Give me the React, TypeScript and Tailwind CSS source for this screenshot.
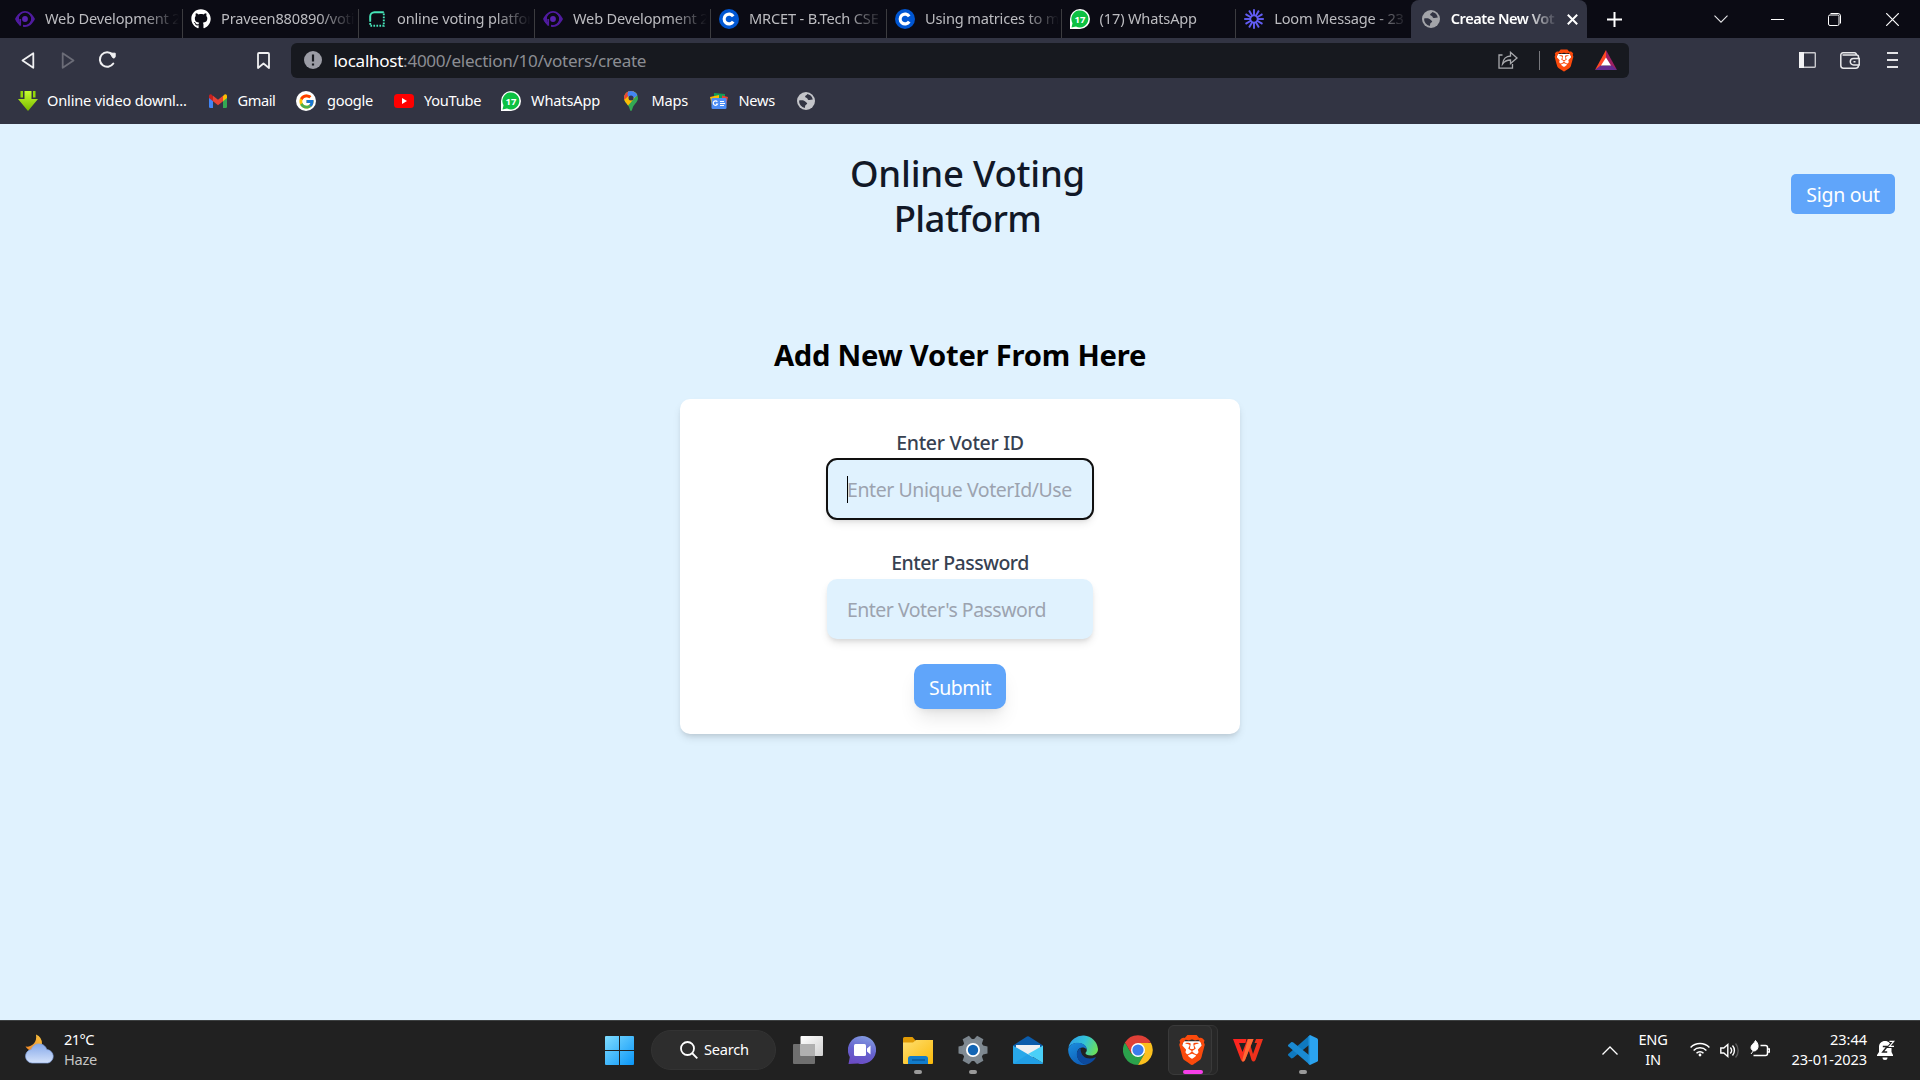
import React from "react";
import { FaGithub } from "react-icons/fa";
import { FcGoogle } from "react-icons/fc";
import { SiBrave } from "react-icons/si";

type IconProps = { className?: string };

const EyeIcon = () => (
  <svg className="h-5 w-5" viewBox="0 0 20 20" fill="none">
    <path d="M0 10C2.500 5 6 2 10 2s7.500 3 10 8c-2.500 5-6 8-10 8-.7 0-1.300-.1-2-.2V15.500A6 6 0 1 0 4 10.200c0 1.500.6 3 1.700 4.100V17C3.300 15.500 1.500 13 0 10Z" fill="#4f1b9e" />
    <circle cx="10" cy="10" r="5.800" fill="#0b0b14" />
    <circle cx="10" cy="10" r="4.600" stroke="#0b0b14" strokeWidth="2" />
    <circle cx="10" cy="10" r="2.900" fill="#5a23b0" />
    <path d="M5.200 10v6.500M1.500 10.500c1 2 2 3.500 4 5" stroke="#4f1b9e" strokeWidth="1.800" />
  </svg>
);

const RenderIcon = () => (
  <svg className="h-4 w-4" viewBox="0 0 16 16" fill="none">
    <path d="M1.200 9V5.500A4.300 4.300 0 0 1 5.500 1.200H14.800" stroke="#46e3b7" strokeWidth="2" />
    <path d="M1.200 9V14.800H14.800V1" stroke="#46e3b7" strokeWidth="1.900" strokeDasharray="1.700 1.300" />
  </svg>
);

const CourseraIcon = () => (
  <svg className="h-5 w-5" viewBox="0 0 20 20" fill="none">
    <circle cx="10" cy="10" r="10" fill="#0056d2" />
    <path d="M14.200 7.400A4.900 4.900 0 1 0 14.200 12.600" stroke="#fff" strokeWidth="3.100" />
  </svg>
);

const WhatsAppBadge = () => (
  <svg className="h-5 w-5" viewBox="0 0 20 20">
    <path d="M0 20V10A10 10 0 1 1 10 20Z" fill="#fff" />
    <path d="M1.500 18.500l1-4.300A8.500 8.500 0 1 1 6 17.500Z" fill="#0dc143" />
    <text x="10" y="13.600" textAnchor="middle" fontSize="9.500" fontWeight="700" fill="#fff" fontFamily="Noto Sans, sans-serif">17</text>
  </svg>
);

const LoomIcon = () => (
  <svg className="h-5 w-5" viewBox="-10 -10 20 20" fill="none" stroke="#625df5" strokeWidth="1.900">
    {[0, 30, 60, 90, 120, 150, 180, 210, 240, 270, 300, 330].map((a) => (
      <path key={a} d="M0 -3.600V-9.800" transform={`rotate(${a})`} />
    ))}
    <circle r="3.700" strokeWidth="1.800" />
  </svg>
);

const GlobeIcon = ({ className }: IconProps) => (
  <svg className={className} viewBox="0 0 18 18">
    <circle cx="9" cy="9" r="9" fill="currentColor" />
    <path d="M2.100 8.500C4.500 8 7 8.200 8.200 9.400 9 10.400 10 10.500 10.200 11.400c.1 1-1.700 1.200-1.900 2.200-.2.900-.3 1.800-.5 2.400A7 7 0 0 1 2.100 8.500Z" fill="#323443" />
    <path d="M10.300 2.100c-.2 1.200-2 1.300-2.200 2.300-.1 1.300 1.700 1 2.300 2 .5 1 .6 1.600 2 1.600 1.300 0 2-.500 3.400-.400A7 7 0 0 0 10.300 2.100Z" fill="#323443" />
  </svg>
);

const tabs = [
  { icon: <EyeIcon />, text: "Web Development 2" },
  { icon: <FaGithub className="h-5 w-5 text-white" />, text: "Praveen880890/voti" },
  { icon: <RenderIcon />, text: "online voting platfor" },
  { icon: <EyeIcon />, text: "Web Development 2" },
  { icon: <CourseraIcon />, text: "MRCET - B.Tech CSE" },
  { icon: <CourseraIcon />, text: "Using matrices to m" },
  { icon: <WhatsAppBadge />, text: "(17) WhatsApp" },
  { icon: <LoomIcon />, text: "Loom Message - 23" },
];

function TabStrip() {
  return (
    <div className="flex h-[38px] bg-[#0b0b14] pl-[7px]">
      {tabs.map((t, i) => (
        <div
          key={i}
          className={`relative flex h-[38px] shrink-0 items-center pl-2 ${i < 5 ? "w-[176px]" : "w-[174.600px]"} ${i < 7 ? "after:absolute after:right-0 after:bottom-0 after:h-[29px] after:w-px after:bg-[#3c3c40]" : ""}`}
        >
          <div className="flex w-5 justify-center">{t.icon}</div>
          <div className="ml-2.5 w-[135px] overflow-hidden whitespace-nowrap text-[14.600px] tracking-[-0.012em] text-[#bcbcc0] [mask-image:linear-gradient(to_right,#000_98px,transparent_134px)]">
            {t.text}
          </div>
        </div>
      ))}
      <div className="flex h-[38px] w-[176px] shrink-0 items-center rounded-t-lg bg-[#323443] pl-[11px]">
        <GlobeIcon className="h-[18px] w-[18px] text-[#a3a4a9]" />
        <div className="ml-[11px] w-[105px] overflow-hidden whitespace-nowrap text-[14.600px] font-semibold tracking-[-0.034em] text-white [mask-image:linear-gradient(to_right,#000_75px,transparent_107px)]">
          Create New Vot
        </div>
        <svg className="ml-[11px] h-[11px] w-[11px]" viewBox="0 0 11 11" stroke="#fff" strokeWidth="2">
          <path d="M.8.8l9.400 9.400M10.200.8L.8 10.200" />
        </svg>
      </div>
      <div className="flex h-[38px] items-center">
        <svg className="ml-[20px] h-[15px] w-[15px]" viewBox="0 0 15 15" stroke="#fff" strokeWidth="2">
          <path d="M7.500 0v15M0 7.500h15" />
        </svg>
        <svg className="ml-[92px] h-2 w-[14px]" viewBox="0 0 14 8" fill="none" stroke="#e6e6e8" strokeWidth="1.100">
          <path d="M.5.7L7 7.200 13.500.7" />
        </svg>
        <div className="ml-[43px] h-px w-[13px] bg-white" />
        <svg className="ml-[44px] h-[13px] w-[13px]" viewBox="0 0 13 13" fill="none" stroke="#fff" strokeWidth="1">
          <rect x=".5" y="2" width="10.500" height="10.500" rx="1.500" />
          <path d="M2.500.5h7.500a2.500 2.500 0 0 1 2.500 2.500v7.500" />
        </svg>
        <svg className="ml-[45px] h-[13px] w-[13px]" viewBox="0 0 13 13" stroke="#fff" strokeWidth="1.200">
          <path d="M.2.2l12.600 12.600M12.800.2L.2 12.800" />
        </svg>
      </div>
    </div>
  );
}

const BraveLion = ({ className }: IconProps) => (
  <div className={`relative ${className}`}>
    <svg className="absolute inset-0 h-full w-full" viewBox="0 0 24 24">
      <path d="M5 5h14l1 4-3 10-5 4-5-4L4 9Z" fill="#fff" />
    </svg>
    <SiBrave className="absolute inset-0 h-full w-full text-[#fb4a0c]" />
  </div>
);

function Toolbar() {
  return (
    <div className="flex h-[44px] items-center bg-[#323443]">
      <svg className="ml-[21px] h-[17px] w-[14px]" viewBox="0 0 14 17" fill="none" stroke="#f0f0f2" strokeWidth="1.800" strokeLinejoin="round">
        <path d="M12.300 1.200v14.600L1.500 8.500Z" />
      </svg>
      <svg className="ml-[26px] h-[17px] w-[14px]" viewBox="0 0 14 17" fill="none" stroke="#6b6c77" strokeWidth="1.800" strokeLinejoin="round">
        <path d="M1.700 1.200v14.600L12.500 8.500Z" />
      </svg>
      <svg className="ml-[23px] h-[18px] w-[19px]" viewBox="0 0 19 18" fill="none" stroke="#f0f0f2" strokeWidth="2">
        <path d="M14.500 3.500A7.300 7.300 0 1 0 15.300 12.500" strokeLinecap="round" />
        <path d="M12 2.200h5.200v3.500a1.500 1.500 0 0 1-2.600.8Z" fill="#f0f0f2" strokeWidth="1" />
      </svg>
      <svg className="ml-[140px] h-[17px] w-[13px]" viewBox="0 0 13 17" fill="none" stroke="#f0f0f2" strokeWidth="1.800" strokeLinejoin="round">
        <path d="M1 2a1 1 0 0 1 1-1h9a1 1 0 0 1 1 1v14l-5.500-4.500L1 16Z" />
      </svg>
      <div className="ml-[21px] flex h-[35px] w-[1338px] items-center rounded-md bg-[#17191f]">
        <svg className="ml-[13px] h-[18px] w-[18px]" viewBox="0 0 18 18">
          <circle cx="9" cy="9" r="9" fill="#9b9ca5" />
          <path d="M9 3.500v7M9 12.500v2" stroke="#17191f" strokeWidth="2.200" />
        </svg>
        <div className="ml-[11.500px] pt-[2px] whitespace-nowrap text-[17.100px] tracking-[-0.017em] text-[#8b8d93]">
          <span className="text-white">localhost</span>:4000/election/10/voters/create
        </div>
        <svg className="ml-auto h-[18px] w-[20px]" viewBox="0 0 20 18" fill="none" stroke="#a8a9ad" strokeWidth="1.300">
          <path d="M4.500 4H1v13.200h13.500V13" />
          <path d="M4.500 13C5 8.500 8 5 12.500 5V1.300L19 7l-6.500 5.500V9C9.500 9 6.500 10.200 4.500 13Z" />
        </svg>
        <div className="ml-[21px] h-[19px] w-px bg-[#77787d]" />
        <BraveLion className="ml-[13px] h-[23px] w-[22px]" />
        <svg className="mr-[12px] ml-[20px] h-[20px] w-[22px]" viewBox="0 0 22 20">
          <path d="M11 0L0 20l11-7Z" fill="#ff4724" />
          <path d="M11 0l11 20-11-7Z" fill="#9e1f63" />
          <path d="M0 20h22l-5-4.500H5.500Z" fill="#662d91" />
          <path d="M11 7.500l-5 8h10Z" fill="#fff" />
        </svg>
      </div>
      <svg className="ml-[170px] h-4 w-[17px]" viewBox="0 0 17 16" fill="none">
        <rect x=".7" y=".7" width="15.600" height="14.600" rx=".7" stroke="#c9c9ce" strokeWidth="1.400" />
        <path d="M0 0h5v16H0Z" fill="#f2f2f4" />
      </svg>
      <svg className="ml-[24px] h-[17px] w-[20px]" viewBox="0 0 20 17" fill="none" stroke="#e9e9ec" strokeWidth="1.500">
        <path d="M18.500 6.500V5a2 2 0 0 0-2-2H2.500M16.500 3a2 2 0 0 0-2-2.200H3A2.200 2.200 0 0 0 .8 3v10.500a2.700 2.700 0 0 0 2.700 2.700h12a3 3 0 0 0 3-3" />
        <path d="M19.200 6.500h-5.700a3.200 3.200 0 0 0 0 6.400h5.700ZM13.500 9.700h2" />
      </svg>
      <div className="ml-[27px] flex w-[11px] flex-col items-center gap-[5px]">
        <div className="h-[2px] w-[11px] bg-[#e3e3e6]" />
        <div className="h-[2px] w-[11px] bg-[#e3e3e6]" />
        <div className="h-[2px] w-[11px] bg-[#e3e3e6]" />
      </div>
    </div>
  );
}

function Bookmarks() {
  const label = "whitespace-nowrap text-[14.600px] text-white";
  return (
    <div className="flex h-[42px] items-center bg-[#323443] pb-[4px]">
      <svg className="ml-[18px] h-5 w-5" viewBox="0 0 20 20">
        <defs>
          <linearGradient id="dl" x1="0" y1="0" x2="0" y2="1">
            <stop offset="0" stopColor="#c6ff2e" />
            <stop offset="1" stopColor="#79b800" />
          </linearGradient>
        </defs>
        <path d="M6.500 0h7v8h6.500L10 20 0 8h6.500Z" fill="url(#dl)" />
        <path d="M2.500 0h2.500v6.500H2.500ZM15 0h2.500v6.500H15Z" fill="#93d60a" />
      </svg>
      <span className={`${label} ml-[9px] w-[140px] tracking-[-0.012em]`}>Online video downl...</span>
      <svg className="ml-[22px] h-[14px] w-[18px]" viewBox="0 0 18 14">
        <path d="M0 2.500V12.700A1.300 1.300 0 0 0 1.300 14H4V5Z" fill="#4285f4" />
        <path d="M18 2.500V12.700a1.300 1.300 0 0 1-1.300 1.300H14V5Z" fill="#34a853" />
        <path d="M14 2l1.300-1.200C16.500-.2 18 .5 18 2.200V4l-4 3.300Z" fill="#fbbc04" />
        <path d="M4 2L2.700.8C1.500-.2 0 .5 0 2.200V4l4 3.300Z" fill="#c5221f" />
        <path d="M4 1.800l5 3.900 5-3.900v5.500l-5 3.900-5-3.900Z" fill="#ea4335" />
      </svg>
      <span className={`${label} ml-[10.500px] w-[38.500px] tracking-[-0.030em]`}>Gmail</span>
      <div className="ml-[20px] flex h-5 w-5 items-center justify-center rounded-full bg-white">
        <FcGoogle className="h-[17px] w-[17px]" />
      </div>
      <span className={`${label} ml-[11px] w-[47px] tracking-[-0.018em]`}>google</span>
      <svg className="ml-[20px] h-[14px] w-5" viewBox="0 0 20 14">
        <rect width="20" height="14" rx="3.500" fill="#f00" />
        <path d="M8 4l5 3-5 3Z" fill="#fff" />
      </svg>
      <span className={`${label} ml-[10px] w-[58px] tracking-[-0.018em]`}>YouTube</span>
      <div className="ml-[19px]"><WhatsAppBadge /></div>
      <span className={`${label} ml-[10px] w-[70px] tracking-[-0.010em]`}>WhatsApp</span>
      <svg className="ml-[23px] h-5 w-[14px]" viewBox="0 0 14 20">
        <defs><clipPath id="pin"><path d="M7 0a7 7 0 0 1 7 7c0 4-3.500 5.500-5.200 9.500C8 18.500 7.900 20 7 20s-1-1.500-1.800-3.500C3.500 12.500 0 11 0 7a7 7 0 0 1 7-7Z" /></clipPath></defs>
        <g clipPath="url(#pin)">
          <path d="M0 0h14v20H0Z" fill="#34a853" />
          <path d="M0 0h14v3L2 17 0 12Z" fill="#fbbc04" />
          <path d="M0 0h10L0 9Z" fill="#ea4335" />
          <path d="M4 0h10v4L7 9 3.500 4Z" fill="#4285f4" />
        </g>
        <circle cx="7" cy="7" r="2.500" fill="#31344a" />
      </svg>
      <span className={`${label} ml-[13.500px] w-[37.500px] tracking-[-0.015em]`}>Maps</span>
      <svg className="ml-[21px] h-4 w-[18px]" viewBox="0 0 18 16">
        <path d="M4 0l11 1v5H4Z" fill="#0f9d58" />
        <path d="M0 4l9-2v9L2 12Z" fill="#fbbc04" />
        <path d="M18 4l-6-1.500v9l4 1Z" fill="#ea4335" />
        <rect x="1.500" y="5" width="15" height="11" rx="1.300" fill="#4d8df6" />
        <path d="M7.300 8.800A2.200 2.200 0 1 0 7.500 11H6M10 8.500h4M10 10.500h5M10 12.500h4" fill="none" stroke="#fff" strokeWidth="1.200" />
      </svg>
      <span className={`${label} ml-[10.500px] w-[37.500px] tracking-[-0.018em]`}>News</span>
      <GlobeIcon className="ml-[21px] h-[18px] w-[18px] text-[#c4c5ca]" />
    </div>
  );
}

function VotingPage() {
  return (
    <main className="flex h-[896px] flex-col items-center bg-[#e0f2fe]">
      <header className="flex w-full items-start pt-[27px]">
        <h1 className="ml-[848px] w-[239px] text-center text-[36.500px] leading-[45px] font-medium tracking-[-0.016em] text-[#111827]">
          <span className="block tracking-[-0.006em]">Online Voting</span>
          <span className="block">Platform</span>
        </h1>
        <button className="mt-[23px] mr-[25px] ml-auto h-10 w-[104px] rounded-[5px] bg-[#60a5fa] pt-0.5 text-[19.500px] tracking-[-0.015em] text-white">
          Sign out
        </button>
      </header>
      <h2 className="mt-[94px] text-[29.200px] leading-10 font-bold tracking-[-0.008em] whitespace-nowrap text-black">Add New Voter From Here</h2>
      <form className="mt-6 flex h-[335px] w-[560px] flex-col items-center rounded-[10px] bg-white pt-[29px] shadow-[0_5px_8px_-1px_rgba(0,0,0,0.100),0_3px_5px_-2px_rgba(0,0,0,0.100)]">
        <label className="text-[19.500px] leading-[30px] font-medium tracking-[-0.015em] text-[#374151]">Enter Voter ID</label>
        <div className="relative mt-px">
          <input
            className="block h-[60px] w-[266px] rounded-[10px] bg-[#e0f2fe] px-5 text-[19.500px] tracking-[-0.022em] shadow-[0_5px_8px_-1px_rgba(0,0,0,0.100),0_3px_5px_-2px_rgba(0,0,0,0.100)] outline-2 -outline-offset-1 outline-[#101010] placeholder:text-[#9ca3af]"
            placeholder="Enter Unique VoterId/Use"
          />
          <div className="absolute top-[17px] left-5 h-[27px] w-px bg-black" />
        </div>
        <label className="mt-[29px] text-[19.500px] leading-[30px] font-medium tracking-[-0.026em] text-[#374151]">Enter Password</label>
        <input
          className="mt-px block h-[60px] w-[266px] rounded-[10px] bg-[#e0f2fe] px-5 text-[19.500px] tracking-[-0.027em] shadow-[0_5px_8px_-1px_rgba(0,0,0,0.100),0_3px_5px_-2px_rgba(0,0,0,0.100)] placeholder:text-[#9ca3af]"
          placeholder="Enter Voter's Password"
        />
        <button className="mt-[25px] h-[45px] w-[92px] rounded-[10px] bg-[#60a5fa] pt-0.5 text-[19.500px] tracking-[-0.025em] text-white shadow-[0_12px_19px_-4px_rgba(0,0,0,0.100),0_5px_8px_-5px_rgba(0,0,0,0.100)]">
          Submit
        </button>
      </form>
    </main>
  );
}

function AppButton({ children, dot }: { children: React.ReactNode; dot?: boolean }) {
  return (
    <div className="relative flex h-full w-[55px] items-center justify-center pb-px">
      {children}
      {dot && <div className="absolute bottom-[6px] left-[23.500px] h-1 w-2 rounded-full bg-[#9a9a9a]" />}
    </div>
  );
}

function Taskbar() {
  return (
    <footer className="flex h-[60px] items-stretch border-t border-[#3d4041] bg-[#212121] text-white">
      <div className="flex w-[605px] items-center pb-[3px]">
        <svg className="ml-[25px] h-[30px] w-[30px]" viewBox="0 0 30 30">
          <defs>
            <linearGradient id="cl" x1="0" y1="0" x2="0" y2="1">
              <stop offset="0" stopColor="#86a9ea" />
              <stop offset="1" stopColor="#d3e1fa" />
            </linearGradient>
            <linearGradient id="mn" x1="1" y1="0" x2="0" y2="1">
              <stop offset="0" stopColor="#f9c440" />
              <stop offset="1" stopColor="#f08424" />
            </linearGradient>
          </defs>
          <path d="M11 .5A10 10 0 0 1 17 10L8 17A10 10 0 0 1 .5 12.500C6 13.500 12.500 9 11 .5Z" fill="url(#mn)" />
          <path d="M7 29a6.800 6.800 0 0 1-.8-13.500A8.200 8.200 0 0 1 21.800 15.600 6.800 6.800 0 0 1 23 29Z" fill="url(#cl)" stroke="#87a6e2" strokeWidth=".7" />
        </svg>
        <div className="ml-[9px] text-[14.600px] leading-5 tracking-[-0.018em]">
          <div className="tracking-[-0.040em]">21°C</div>
          <div className="text-[#c5c5c5]">Haze</div>
        </div>
      </div>
      <div className="flex items-center">
        <svg className="h-[29px] w-[29px]" viewBox="0 0 29 29">
          <defs>
            <linearGradient id="win" x1="0" y1="0" x2="1" y2="1">
              <stop offset="0" stopColor="#7fdcff" />
              <stop offset="1" stopColor="#0a96f8" />
            </linearGradient>
          </defs>
          <path d="M1 0h13v14H0V1a1 1 0 0 1 1-1ZM15 0h13a1 1 0 0 1 1 1v13H15ZM0 15h14v14H1a1 1 0 0 1-1-1ZM15 15h14v13a1 1 0 0 1-1 1H15Z" fill="url(#win)" />
        </svg>
        <div className="mb-px ml-[17px] flex h-10 w-[125px] items-center rounded-full border border-[#333333] bg-[#2d2d2d]">
          <svg className="ml-[28px] h-[18px] w-[18px]" viewBox="0 0 18 18" fill="none" stroke="#fff" strokeWidth="1.800">
            <circle cx="7.500" cy="7.500" r="6.500" />
            <path d="M12 12l5.300 5.300" />
          </svg>
          <span className="ml-[6px] text-[14.600px] tracking-[-0.015em]">Search</span>
        </div>
        <div className="ml-[4px] flex h-full">
          <AppButton>
            <svg className="h-7 w-[30px]" viewBox="0 0 30 28">
              <defs><linearGradient id="tv" x1="0" y1="0" x2="1" y2="1"><stop offset="0" stopColor="#fff" /><stop offset="1" stopColor="#d0d0d0" /></linearGradient></defs>
              <rect y="8" width="22" height="20" rx="1" fill="#6f6f6f" />
              <rect x="7.500" width="22.500" height="20" rx="1" fill="url(#tv)" />
              <rect x="7.500" y="8" width="14.500" height="12" fill="#b0b0b0" />
            </svg>
          </AppButton>
          <AppButton>
            <svg className="mr-px h-7 w-7" viewBox="0 0 28 28">
              <defs><linearGradient id="ch" x1=".6" y1="0" x2=".3" y2="1"><stop offset="0" stopColor="#829ae0" /><stop offset=".5" stopColor="#6664cf" /><stop offset="1" stopColor="#6b4bc4" /></linearGradient></defs>
              <path d="M14 0a14 14 0 1 1-4 27.400L.5 28l1.300-7A14 14 0 0 1 14 0Z" fill="url(#ch)" />
              <rect x="6" y="8" width="12" height="12" rx="1.500" fill="#fff" />
              <path d="M19 12.500l3.500-3v9l-3.500-3Z" fill="#fff" />
            </svg>
          </AppButton>
          <AppButton dot>
            <svg className="h-[27px] w-[30px]" viewBox="0 0 30 27">
              <defs><linearGradient id="fo" x1="0" y1="0" x2="1" y2="1"><stop offset="0" stopColor="#ffdf70" /><stop offset="1" stopColor="#fab909" /></linearGradient></defs>
              <path d="M0 1.500A1.500 1.500 0 0 1 1.500 0h8L13 4v4H0Z" fill="#e09a05" />
              <path d="M0 5.500h10L13 3h17v23a1 1 0 0 1-1 1H1a1 1 0 0 1-1-1Z" fill="url(#fo)" />
              <path d="M5 27v-5.500A2.500 2.500 0 0 1 7.500 19h15a2.500 2.500 0 0 1 2.500 2.500V27Z" fill="#127ccb" />
              <path d="M9 23h13" stroke="#07508f" strokeWidth="1.200" />
            </svg>
          </AppButton>
          <AppButton dot>
            <svg className="h-[30px] w-[30px]" viewBox="-15 -15 30 30">
              {[30, 90, 150, 210, 270, 330].map((a) => (
                <path key={a} d="M-4.700 -9L-3.600 -14.500H3.600L4.700 -9Z" fill="#7c868e" transform={`rotate(${a})`} />
              ))}
              <circle r="11" fill="#808a92" />
              <circle r="7" fill="#fff" />
              <circle r="5.200" fill="#1265b4" />
            </svg>
          </AppButton>
          <AppButton>
            <svg className="h-7 w-[30px]" viewBox="0 0 30 28">
              <path d="M0 9.500L14 .5a2 2 0 0 1 2 0L30 9.500 15 19Z" fill="#0b5cab" />
              <path d="M3 9h24v8l-12 6L3 16Z" fill="#eef0f2" />
              <path d="M0 9.500L30 27a1 1 0 0 1-1 1H1a1 1 0 0 1-1-1Z" fill="#28a8ea" />
              <path d="M30 9.500v17.500L15 18Z" fill="#4ad0f8" />
              <path d="M0 28L15 18.200 30 28Z" fill="#1490df" opacity=".35" />
            </svg>
          </AppButton>
          <AppButton>
            <svg className="h-[30px] w-[30px]" viewBox="0 0 30 30">
              <defs>
                <linearGradient id="e1" x1="0" y1=".3" x2="1" y2=".6"><stop offset="0" stopColor="#2f9fe8" /><stop offset=".5" stopColor="#33c3d8" /><stop offset="1" stopColor="#6be05a" /></linearGradient>
                <linearGradient id="e2" x1="0" y1="0" x2=".5" y2="1"><stop offset="0" stopColor="#1b8fdf" /><stop offset="1" stopColor="#0f5fb8" /></linearGradient>
              </defs>
              <path d="M.5 12A15 15 0 0 1 30 14c0 4-3 6.500-7 6.500-3.500 0-5.500-1.200-5.500-2.300 0-.9 1.300-1.300 1.300-3.200C18.800 11 15 8 10 8 5.500 8 2 10 .5 12Z" fill="url(#e1)" />
              <path d="M.2 14C.6 10.500 5 7.800 10 7.800c5 0 8.800 3.200 8.800 7-1-1.800-2.800-2.300-4.500-2.300-3.300 0-5.300 3-5.300 6.500 0 5 4 10.300 10.500 10.300A15 15 0 0 1 .2 14Z" fill="url(#e2)" />
              <path d="M12.500 13c-2.300 1.500-3.700 3.500-3.700 6 0 5.500 4.700 10.700 10.500 10.300 3.500-1 6.500-3.300 8.300-6.200.3-.6-.2-1-.8-.7-5.800 2.500-14.300 1-14.300-9.400Z" fill="#0c4a9e" />
            </svg>
          </AppButton>
          <AppButton>
            <svg className="h-[30px] w-[30px]" viewBox="0 0 30 30">
              <path d="M15 15H28.500A15 15 0 0 0 2 7.500Z" fill="#df4037" />
              <path d="M2 7.500A15 15 0 0 0 15 30l6.500-11.300H8.500Z" fill="#2ba24c" />
              <path d="M15 30A15 15 0 0 0 28 7.900H15l6.500 10.900Z" fill="#fbc01e" />
              <path d="M2 7.500A15 15 0 0 1 28 7.800H15v7L8.600 18.800Z" fill="#df4037" />
              <circle cx="15" cy="15" r="7" fill="#fff" />
              <circle cx="15" cy="15" r="5.600" fill="#3b7ded" />
            </svg>
          </AppButton>
          <div className="relative flex h-full w-[55px] items-center justify-center">
            <div className="absolute top-1 left-[9px] h-[50px] w-[44px] rounded-[6px] border border-[#353535] bg-[#272727]" />
            <div className="absolute top-1 left-[3px] h-[50px] w-[44px] rounded-[6px] border border-[#3a3a3a] bg-[#2d2d2d]" />
            <BraveLion className="mr-px mb-px h-[30px] w-[30px]" />
            <div className="absolute bottom-[6px] left-[18px] h-1 w-5 rounded-full bg-[#f63fe8]" />
          </div>
          <AppButton>
            <svg className="h-6 w-[30px]" viewBox="0 0 30 24" fill="none">
              <defs><linearGradient id="wp" x1="0" y1="0" x2="1" y2="1"><stop offset="0" stopColor="#ff2020" /><stop offset="1" stopColor="#f5371c" /></linearGradient></defs>
              <path d="M0 1h13.500l-1 4H6l3.500 9L14.500 1h6L12 22q-2 3-4 0Z" fill="url(#wp)" />
              <path d="M15 10l3.500 12q2 3 4 0L30 1h-7l-1.500 4h2.500L20 16 17 6Z" fill="#f0311c" />
              <path d="M15 1h5.500L12 22q-1.500 2.500-3 1Z" fill="#ff6a35" />
            </svg>
          </AppButton>
          <AppButton dot>
            <svg className="h-[30px] w-[30px]" viewBox="0 0 30 30">
              <path d="M22 0l1.500 8L5 23 3.500 23.500.3 20.500a1 1 0 0 1 0-1.400Z" fill="#0f79bf" />
              <path d="M22 30l1.500-8L5 7.300 3.500 7 .3 9.800a1 1 0 0 0 0 1.400Z" fill="#1a8ad2" />
              <path d="M22 0l7 3.200a1.800 1.800 0 0 1 1 1.600V25.200a1.800 1.800 0 0 1-1 1.600L22 30Z" fill="#2ba3ef" />
              <path d="M22 0v30l-1.500-1V1.500Z" fill="#2196e0" />
            </svg>
          </AppButton>
        </div>
      </div>
      <div className="ml-auto flex items-center pr-[25px] pb-[3px] text-[14.600px] leading-5">
        <svg className="mt-[2px] h-[9px] w-4" viewBox="0 0 16 9" fill="none" stroke="#fff" strokeWidth="1.300"><path d="M.5 8.500L8 1l7.500 7.500" /></svg>
        <div className="ml-[20px] w-[30px] text-center tracking-[-0.020em]">
          <div>ENG</div>
          <div>IN</div>
        </div>
        <svg className="ml-[22px] h-[15px] w-5" viewBox="0 0 20 15" fill="none" stroke="#fff" strokeWidth="1.500">
          <path d="M.6 5.500a13.300 13.300 0 0 1 18.800 0M3.600 8.500a9 9 0 0 1 12.800 0M6.500 11.300a5 5 0 0 1 7 0" />
          <circle cx="10" cy="13" r="1.400" fill="#fff" stroke="none" />
        </svg>
        <svg className="mt-[2px] ml-[10px] h-[17px] w-5" viewBox="0 0 20 17" fill="none" stroke="#fff" strokeWidth="1.400">
          <path d="M.8 6v5h3l4 3.500V2.500L3.800 6Z" />
          <path d="M10.300 5.500a4.500 4.500 0 0 1 0 6M12.500 3.500a7.500 7.500 0 0 1 0 10" />
          <path d="M15.500 1.500a10.500 10.500 0 0 1 0 14" stroke="#5a5a5a" />
        </svg>
        <svg className="mb-[2px] ml-[10px] h-[17px] w-5" viewBox="0 0 20 17" fill="none" stroke="#fff" strokeWidth="1.500">
          <path d="M10.500 5.500h5a2 2 0 0 1 2 2v6a2 2 0 0 1-2 2H3.500" />
          <path d="M18 9h1.500v3H18" />
          <path d="M5.500.5C8.500 3.500 9 7.500 6.500 10 4.500 12 1 10.500 1 7.500 1 4.500 4 4 5.500.5ZM1 14L4 10" fill="#fff" strokeWidth="1" />
        </svg>
        <div className="ml-[19px] w-[78px] text-right tracking-[-0.005em] whitespace-nowrap">
          <div>23:44</div>
          <div>23-01-2023</div>
        </div>
        <svg className="mt-[2px] ml-[10px] h-5 w-[18px]" viewBox="0 0 18 20">
          <path d="M8 1C4.500 1 2 3.500 2 7v5L0 15v1h16v-1l-1.500-3V7C14.500 3.500 11.500 1 8 1ZM5.500 17.500h5a2.500 2.500 0 0 1-5 0Z" fill="#fff" />
          <path d="M5.800 6.500h4.400L5.800 12h4.400" fill="none" stroke="#212121" strokeWidth="1.500" />
          <path d="M12 .8h5L12.500 6.500H17" fill="none" stroke="#212121" strokeWidth="3.200" />
          <path d="M12.500 1.300h4.300L12.500 6.300h4.500" fill="none" stroke="#fff" strokeWidth="1.200" />
        </svg>
      </div>
    </footer>
  );
}

export default function App() {
  return (
    <div className="h-[1080px] w-[1920px] overflow-hidden font-['Noto_Sans',sans-serif]">
      <TabStrip />
      <Toolbar />
      <Bookmarks />
      <VotingPage />
      <Taskbar />
    </div>
  );
}
